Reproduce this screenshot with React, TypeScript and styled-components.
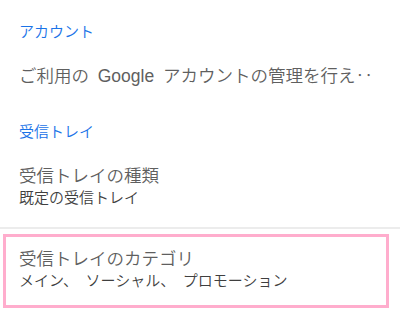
import React from "react";
import styled, { createGlobalStyle } from "styled-components";

const GlobalStyle = createGlobalStyle`
  html, body {
    margin: 0;
    padding: 0;
    background: #ffffff;
  }
  body {
    font-family: "Liberation Sans", "Noto Sans CJK JP", sans-serif;
    -webkit-font-smoothing: antialiased;
  }
`;

const Page = styled.div`
  width: 400px;
  display: flex;
  flex-direction: column;
`;

const SectionHeader = styled.div`
  padding: 20px 19px 0;
  font-size: 15px;
  line-height: 24px;
  color: #1a73e8;
  font-weight: 350;
`;

const Item = styled.div<{ selected?: boolean }>`
  display: flex;
  flex-direction: column;
  padding: 21px 19px 13px;
  ${({ selected }) =>
    selected &&
    `
    margin: 5px 11px 0 3px;
    padding: 11px 13px 13px;
    border: 3px solid #ffadcd;
  `}
`;

const Title = styled.div`
  font-size: 17.5px;
  line-height: 22px;
  color: #5f5f5f;
  font-weight: 350;
  white-space: nowrap;
`;

const Sub = styled.div`
  font-size: 15px;
  line-height: 22px;
  color: #3f3f3f;
  font-weight: 350;
  white-space: nowrap;
`;

const SectionEnd = styled.div`
  height: 5px;
`;

const Divider = styled.div`
  height: 2px;
  background: #ececec;
`;

export default function App() {
  return (
    <>
      <GlobalStyle />
      <Page>
        <SectionHeader>アカウント</SectionHeader>
        <Item>
          <Title>ご利用の{"\u2002"}Google{"\u2002"}アカウントの管理を行え‥</Title>
        </Item>

        <SectionHeader>受信トレイ</SectionHeader>
        <Item>
          <Title>受信トレイの種類</Title>
          <Sub>既定の受信トレイ</Sub>
        </Item>
        <SectionEnd />
        <Divider />

        <Item selected>
          <Title>受信トレイのカテゴリ</Title>
          <Sub>メイン、{"\u2002"}ソーシャル、{"\u2002"}プロモーション</Sub>
        </Item>
      </Page>
    </>
  );
}
